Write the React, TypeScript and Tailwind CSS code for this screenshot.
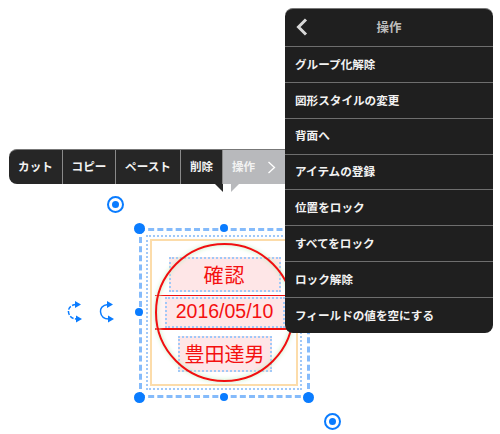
const menuItems = [
  'グループ化解除',
  '図形スタイルの変更',
  '背面へ',
  'アイテムの登録',
  '位置をロック',
  'すべてをロック',
  'ロック解除',
  'フィールドの値を空にする',
];

const toolbarItems = [
  { label: 'カット', width: 'w-[54px]' },
  { label: 'コピー', width: 'w-[53px]' },
  { label: 'ペースト', width: 'w-[65px]' },
  { label: '削除', width: 'w-[42px]' },
];

const fontStack = { fontFamily: '"Noto Sans CJK JP", "Liberation Sans", sans-serif' };

const Target = ({ className }: { className: string }) => (
  <div className={`absolute flex h-[17px] w-[17px] items-center justify-center rounded-full border-2 border-[#0a7cff] ${className}`}>
    <div className="h-[7px] w-[7px] rounded-full bg-[#0a7cff]" />
  </div>
);

const Handle = ({ className, small }: { className: string; small?: boolean }) => (
  <div className={`absolute rounded-full bg-[#0a7cff] ${small ? 'h-2 w-2' : 'h-[11px] w-[11px]'} ${className}`} />
);

const Field = ({ className, text }: { className: string; text: string }) => (
  <div className={`flex items-center justify-center border-2 border-dotted border-[#a0c8f8] bg-[#fee6e7] text-[#f41010] ${className}`}>
    {text}
  </div>
);

const RotateArrow = ({ className, dashed }: { className: string; dashed?: boolean }) => (
  <svg className={`absolute ${className}`} width="16" height="22" viewBox="0 0 16 22" fill="none">
    <path d="M9 3.5C3 4 1 8 1.5 11C2 15 5 18 10 18" stroke="#0a7cff" strokeWidth="1.5" strokeDasharray={dashed ? '4 1.5' : undefined} />
    <path d="M8 0L14 3.5L8 7Z" fill="#0a7cff" />
    <path d="M9 14.5L15 18L9 21.5Z" fill="#0a7cff" />
  </svg>
);

const App = () => {
  return (
    <div className="relative h-[434px] w-[500px] overflow-hidden bg-white" style={fontStack}>
      {/* selection frame with the stamp nested inside */}
      <div className="absolute left-[139px] top-[228px] h-[170px] w-[171px] border-[3px] border-dashed border-[#85bbfb] pb-[4px] pl-[4px] pr-[5px] pt-[4px]">
        <div className="border-2 border-dotted border-[#a0c8f8] p-[2px]">
          <div className="border-2 border-[#fcdcaa] pb-[2px] pl-[3px] pr-[1px] pt-[2px]">
            <div className="relative flex h-[139px] w-[139px] flex-col items-center pt-[14px]">
              <Field className="h-[35px] w-[112px] text-[20px] tracking-[1px]" text="確認" />
              <div className="mt-[3px] flex h-[35px] w-full items-center justify-center border-b-2 border-t-[1.5px] border-[#f01010] bg-[#fff3f3]">
                <Field className="h-[31px] w-[120px] font-['Liberation_Sans'] text-[19.5px]" text="2016/05/10" />
              </div>
              <Field className="mt-[6px] h-[36px] w-[94px] text-[20px]" text="豊田達男" />
              <div className="absolute inset-0 rounded-full border-2 border-[#f01010] shadow-[0_0_5px_#c8f0c8,inset_0_0_5px_#c8f0c8]" />
            </div>
          </div>
        </div>
      </div>

      {/* handles */}
      <Handle className="left-[134px] top-[223px]" />
      <Handle className="left-[134px] top-[392px]" />
      <Handle className="left-[303px] top-[392px]" />
      <Handle small className="left-[220px] top-[224px]" />
      <Handle small className="left-[135px] top-[308px]" />
      <Handle small className="left-[220px] top-[393px]" />
      <Target className="left-[107px] top-[196px]" />
      <Target className="left-[324px] top-[413px]" />
      <RotateArrow dashed className="left-[67px] top-[301px]" />
      <RotateArrow className="left-[99px] top-[301px]" />

      {/* context toolbar */}
      <div className="absolute left-[9px] top-[149px] flex h-[35px] w-[276px] overflow-hidden rounded-l-[8px] border-t border-[#777] bg-[#262626] text-[11.6px] font-bold text-[#f2f2f2]">
        {toolbarItems.map((item) => (
          <div key={item.label} className={`flex items-center justify-center whitespace-nowrap border-r border-[#8a8a8a] ${item.width}`}>
            {item.label}
          </div>
        ))}
        <div className="flex flex-1 items-center justify-between bg-[#b8b9bc] pl-[9px] pr-[9px]">
          <span>操作</span>
          <svg width="9" height="13" viewBox="0 0 9 13" fill="none">
            <path d="M1.5 1L7.5 6.5L1.5 12" stroke="#ffffff" strokeWidth="1.3" />
          </svg>
        </div>
      </div>
      <div className="absolute left-[215px] top-[184px] h-0 w-0 border-x-[8px] border-t-[8px] border-x-transparent border-t-[#262626] [clip-path:inset(0_8px_0_0)]" />
      <div className="absolute left-[223px] top-[184px] h-0 w-0 border-x-[8px] border-t-[8px] border-x-transparent border-t-[#b8b9bc] [clip-path:inset(0_0_0_8px)]" />

      {/* operations menu */}
      <div className="absolute left-[285px] top-[8px] flex h-[325px] w-[208px] flex-col overflow-hidden rounded-[8px] border-t border-[#777] bg-[#1f1f1f] text-[#f2f2f2]">
        <div className="relative flex h-[37px] items-center justify-center text-[12.5px] font-bold text-[#bdbdbd]">
          <svg className="absolute left-[11px] top-[9px]" width="12" height="18" viewBox="0 0 12 18" fill="none">
            <path d="M10 1.5L2.5 9L10 16.5" stroke="#d8d8d8" strokeWidth="3" />
          </svg>
          操作
        </div>
        {menuItems.map((item) => (
          <div key={item} className="flex h-[36px] items-center whitespace-nowrap border-t-[1.5px] border-[#6e6e6e] pl-[10px] text-[11.6px] font-bold">
            {item}
          </div>
        ))}
      </div>
    </div>
  );
};

export default App;
